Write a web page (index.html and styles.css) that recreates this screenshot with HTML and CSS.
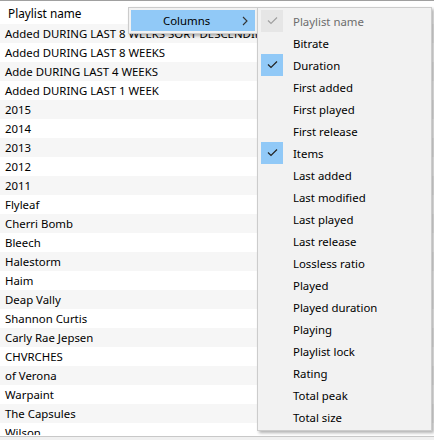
FILE: index.html
```html
<!DOCTYPE html>
<html lang="en">
<head>
    <meta charset="UTF-8">
    <title>Playlists</title>
    <link rel="stylesheet" href="styles.css">
</head>
<body>

<div class="window">
    <div class="playlists">
        <div class="list-header">Playlist name</div>
        <ul class="rows">
            <li>Added DURING LAST 8 WEEKS SORT DESCENDING</li>
            <li>Added DURING LAST 8 WEEKS</li>
            <li>Adde DURING LAST 4 WEEKS</li>
            <li>Added DURING LAST 1 WEEK</li>
            <li>2015</li>
            <li>2014</li>
            <li>2013</li>
            <li>2012</li>
            <li>2011</li>
            <li>Flyleaf</li>
            <li>Cherri Bomb</li>
            <li>Bleech</li>
            <li>Halestorm</li>
            <li>Haim</li>
            <li>Deap Vally</li>
            <li>Shannon Curtis</li>
            <li>Carly Rae Jepsen</li>
            <li>CHVRCHES</li>
            <li>of Verona</li>
            <li>Warpaint</li>
            <li>The Capsules</li>
            <li>Wilson</li>
        </ul>
    </div>
    <div class="statusbar"></div>

    <!-- context menu -->
    <div class="menu context-menu">
        <div class="menu-item active">
            <span class="label">Columns</span>
            <svg class="arrow" width="8" height="10" viewBox="0 0 8 10"><polyline points="2,1 6,5 2,9" fill="none" stroke="#333" stroke-width="1.1"/></svg>
        </div>
    </div>

    <div class="menu submenu">
        <div class="menu-item disabled checked"><span class="check"><svg width="22" height="22" viewBox="0 0 22 22"><polyline points="7,10.5 10,13.5 16,7.5" fill="none" stroke-width="1.2"/></svg></span><span class="label">Playlist name</span></div>
        <div class="menu-item"><span class="check"></span><span class="label">Bitrate</span></div>
        <div class="menu-item checked"><span class="check"><svg width="22" height="22" viewBox="0 0 22 22"><polyline points="7,10.5 10,13.5 16,7.5" fill="none" stroke-width="1.2"/></svg></span><span class="label">Duration</span></div>
        <div class="menu-item"><span class="check"></span><span class="label">First added</span></div>
        <div class="menu-item"><span class="check"></span><span class="label">First played</span></div>
        <div class="menu-item"><span class="check"></span><span class="label">First release</span></div>
        <div class="menu-item checked"><span class="check"><svg width="22" height="22" viewBox="0 0 22 22"><polyline points="7,10.5 10,13.5 16,7.5" fill="none" stroke-width="1.2"/></svg></span><span class="label">Items</span></div>
        <div class="menu-item"><span class="check"></span><span class="label">Last added</span></div>
        <div class="menu-item"><span class="check"></span><span class="label">Last modified</span></div>
        <div class="menu-item"><span class="check"></span><span class="label">Last played</span></div>
        <div class="menu-item"><span class="check"></span><span class="label">Last release</span></div>
        <div class="menu-item"><span class="check"></span><span class="label">Lossless ratio</span></div>
        <div class="menu-item"><span class="check"></span><span class="label">Played</span></div>
        <div class="menu-item"><span class="check"></span><span class="label">Played duration</span></div>
        <div class="menu-item"><span class="check"></span><span class="label">Playing</span></div>
        <div class="menu-item"><span class="check"></span><span class="label">Playlist lock</span></div>
        <div class="menu-item"><span class="check"></span><span class="label">Rating</span></div>
        <div class="menu-item"><span class="check"></span><span class="label">Total peak</span></div>
        <div class="menu-item"><span class="check"></span><span class="label">Total size</span></div>
    </div>
</div>

</body>
</html>
```

FILE: styles.css
```css
/* base */
body {
    margin: 0;
    padding: 0;
    font-family: 'Noto Sans', 'Liberation Sans', sans-serif;
    font-size: 11.4px;
    color: #000;
    background-color: #fff;
}

.window {
    position: relative;
    width: 434px;
    height: 440px;
    overflow: hidden;
    border-top: 1px solid #a0a0a0;
    box-sizing: border-box;
}

/* playlist list */
.playlists {
    height: 434px;
    overflow: hidden;
}

.list-header {
    height: 23px;
    line-height: 25px;
    padding-left: 8px;
    font-size: 11.8px;
}

.rows {
    list-style: none;
    margin: 0;
    padding: 0;
}

.rows li {
    height: 19px;
    line-height: 19px;
    padding-left: 5px;
    white-space: nowrap;
    overflow: hidden;
}

.rows li:nth-child(odd) {
    background-color: #f6f6f6;
}

.statusbar {
    height: 4px;
    margin-top: 1px;
    border-top: 1px solid #c8c8c8;
    background-color: #f0f0f0;
}

/* menus */
.menu {
    position: absolute;
    background-color: #f2f2f2;
    border: 1px solid #cccccc;
    box-shadow: 2px 2px 3px rgba(0, 0, 0, 0.3);
    padding: 2px;
}

.menu-item {
    display: flex;
    align-items: center;
    height: 22px;
}

.context-menu {
    left: 128px;
    top: 6px;
    width: 124px;
}

.context-menu .menu-item {
    height: 21px;
    padding: 0 6px 0 32px;
}

.context-menu .label {
    flex: 1;
}

.menu-item.active {
    background-color: #91c9f7;
}

.submenu {
    left: 257px;
    top: 6px;
    width: 169px;
}

.check {
    width: 22px;
    height: 22px;
    margin-left: 1px;
    margin-right: 10px;
}

.check svg {
    display: block;
    stroke: #222;
}

.checked .check {
    background-color: #91c9f7;
}

.disabled .check {
    background-color: #e6e6e6;
}

.disabled .check svg {
    stroke: #a0a0a0;
}

.disabled .label {
    color: #6d6d6d;
}
```
